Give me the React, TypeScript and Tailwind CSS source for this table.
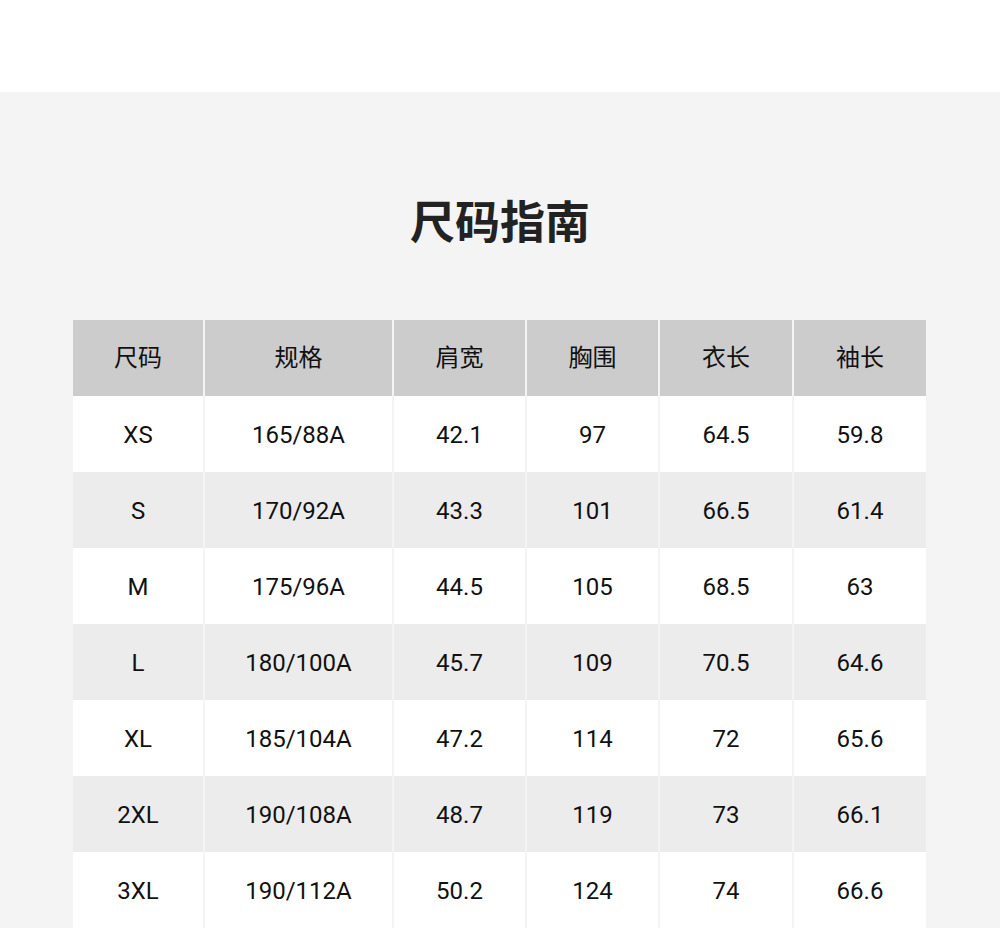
const headers = ['尺码', '规格', '肩宽', '胸围', '衣长', '袖长'];

const rows = [
  ['XS', '165/88A', '42.1', '97', '64.5', '59.8'],
  ['S', '170/92A', '43.3', '101', '66.5', '61.4'],
  ['M', '175/96A', '44.5', '105', '68.5', '63'],
  ['L', '180/100A', '45.7', '109', '70.5', '64.6'],
  ['XL', '185/104A', '47.2', '114', '72', '65.6'],
  ['2XL', '190/108A', '48.7', '119', '73', '66.1'],
  ['3XL', '190/112A', '50.2', '124', '74', '66.6'],
];

export default function App() {
  return (
    <div className="min-h-[928px] bg-white font-['Roboto','Noto_Sans_CJK_SC',sans-serif] text-[#111]">
      <div className="h-[92px] bg-white" />
      <section className="bg-[#f4f4f4] px-[73px] pt-[102px] pb-10">
        <h1 className="text-center text-[45px] leading-[60px] font-bold text-[#222]">尺码指南</h1>
        <div className="mt-[66px] grid grid-cols-[130px_187px_131px_131px_132px_132px] gap-x-[2px]">
          {headers.map((h) => (
            <div key={h} className="flex h-[76px] items-center justify-center bg-[#cccccc] text-[24px]">
              {h}
            </div>
          ))}
          {rows.map((r, i) =>
            r.map((c, j) => (
              <div
                key={`${i}-${j}`}
                className={`flex h-[76px] items-center justify-center pt-[2px] text-[24px] ${
                  i % 2 === 0 ? 'bg-white' : 'bg-[#ececec]'
                }`}
              >
                {c}
              </div>
            ))
          )}
        </div>
      </section>
    </div>
  );
}
